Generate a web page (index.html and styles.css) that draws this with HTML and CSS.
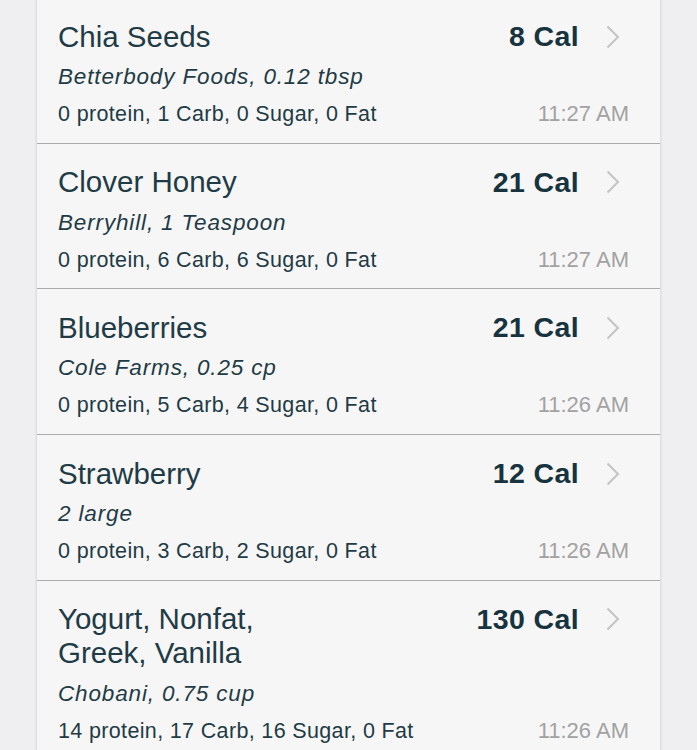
FILE: index.html
```html
<!DOCTYPE html>
<html lang="en">
<head>
  <meta charset="UTF-8">
  <title>Food Diary</title>
  <link rel="stylesheet" href="styles.css">
</head>
<body>
  <div class="card">

    <div class="entry">
      <div class="title">Chia Seeds</div>
      <div class="cal-wrap">
        <span class="cal">8 Cal</span>
        <svg class="chev" width="14" height="24" viewBox="0 0 14 24"><path d="M1.5 1.5 L12 12 L1.5 22.5" fill="none" stroke="#c4c4c6" stroke-width="2"/></svg>
      </div>
      <div class="brand">Betterbody Foods, 0.12 tbsp</div>
      <div class="macros">0 protein, 1 Carb, 0 Sugar, 0 Fat</div>
      <div class="time">11:27 AM</div>
    </div>

    <div class="entry">
      <div class="title">Clover Honey</div>
      <div class="cal-wrap">
        <span class="cal">21 Cal</span>
        <svg class="chev" width="14" height="24" viewBox="0 0 14 24"><path d="M1.5 1.5 L12 12 L1.5 22.5" fill="none" stroke="#c4c4c6" stroke-width="2"/></svg>
      </div>
      <div class="brand">Berryhill, 1 Teaspoon</div>
      <div class="macros">0 protein, 6 Carb, 6 Sugar, 0 Fat</div>
      <div class="time">11:27 AM</div>
    </div>

    <div class="entry">
      <div class="title">Blueberries</div>
      <div class="cal-wrap">
        <span class="cal">21 Cal</span>
        <svg class="chev" width="14" height="24" viewBox="0 0 14 24"><path d="M1.5 1.5 L12 12 L1.5 22.5" fill="none" stroke="#c4c4c6" stroke-width="2"/></svg>
      </div>
      <div class="brand">Cole Farms, 0.25 cp</div>
      <div class="macros">0 protein, 5 Carb, 4 Sugar, 0 Fat</div>
      <div class="time">11:26 AM</div>
    </div>

    <div class="entry">
      <div class="title">Strawberry</div>
      <div class="cal-wrap">
        <span class="cal">12 Cal</span>
        <svg class="chev" width="14" height="24" viewBox="0 0 14 24"><path d="M1.5 1.5 L12 12 L1.5 22.5" fill="none" stroke="#c4c4c6" stroke-width="2"/></svg>
      </div>
      <div class="brand">2 large</div>
      <div class="macros">0 protein, 3 Carb, 2 Sugar, 0 Fat</div>
      <div class="time">11:26 AM</div>
    </div>

    <div class="entry">
      <div class="title">Yogurt, Nonfat, Greek, Vanilla</div>
      <div class="cal-wrap">
        <span class="cal">130 Cal</span>
        <svg class="chev" width="14" height="24" viewBox="0 0 14 24"><path d="M1.5 1.5 L12 12 L1.5 22.5" fill="none" stroke="#c4c4c6" stroke-width="2"/></svg>
      </div>
      <div class="brand">Chobani, 0.75 cup</div>
      <div class="macros">14 protein, 17 Carb, 16 Sugar, 0 Fat</div>
      <div class="time">11:26 AM</div>
    </div>

  </div>
</body>
</html>
```

FILE: styles.css
```css
html, body {
  margin: 0;
  padding: 0;
  background-color: #efeff2;
  font-family: 'Liberation Sans', Arial, sans-serif;
  color: #1f3b45;
  overflow: hidden;
}

.card {
  margin: -2px 37px 0;
  background-color: #f6f6f6;
  box-shadow: 0 0 3px rgba(0,0,0,0.18);
}

.entry {
  display: grid;
  grid-template-columns: 1fr auto;
  padding: 21.5px 31px 13.7px 21px;
  border-bottom: 1.5px solid #acacac;
}

.title {
  font-size: 29.5px;
  line-height: 34px;
  max-width: 250px;
}

.cal-wrap {
  display: flex;
  align-items: center;
  gap: 27px;
  height: 34px;
  margin-right: 9px;
}

.cal {
  font-size: 28.5px;
  font-weight: bold;
  color: #17333e;
  letter-spacing: 0.4px;
}

.chev {
  display: block;
}

.brand {
  grid-column: 1 / span 2;
  font-size: 22.5px;
  font-style: italic;
  letter-spacing: 0.85px;
  line-height: 30px;
  margin-top: 8.5px;
}

.macros {
  font-size: 21.5px;
  line-height: 30px;
  margin-top: 7px;
  letter-spacing: 0.35px;
}

.time {
  font-size: 22px;
  line-height: 30px;
  margin-top: 7px;
  color: #a2a2a2;
  text-align: right;
  align-self: end;
}
```
